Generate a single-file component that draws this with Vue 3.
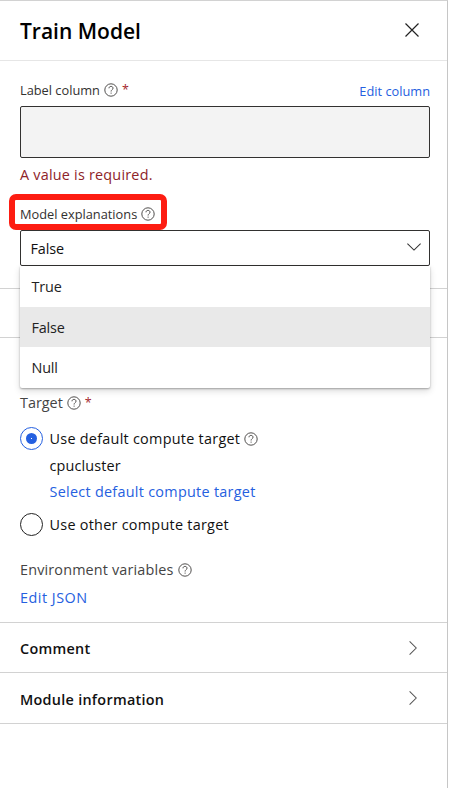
<script setup>
import { h, ref } from 'vue'

const options = ['True', 'False', 'Null']
const selected = ref('False')
const target = ref('default')
const sections = ['Comment', 'Module information']

const HelpIcon = () =>
  h('svg', { width: 14, height: 14, viewBox: '0 0 14 14', fill: 'none', stroke: '#484644', 'stroke-width': 0.95 }, [
    h('circle', { cx: 7, cy: 7, r: 6.2 }),
    h('path', { d: 'M5 5.3C5 4.1 5.8 3.4 7 3.4s2 .7 2 1.8C9 6.7 7.1 6.7 7.1 8.5' }),
    h('path', { d: 'M7.1 9.6v1.1' }),
  ])
</script>

<template>
  <aside class="panel">
    <header class="header">
      <h1 class="title">Train Model</h1>
      <svg class="close" width="14" height="14" viewBox="0 0 14 14">
        <path d="M.5.5l13 13M13.5.5l-13 13" fill="none" stroke="#222" stroke-width="1.2" />
      </svg>
    </header>

    <section class="fields">
      <div class="label-row">
        <span class="small">Label column</span>
        <HelpIcon class="help" />
        <span class="star">*</span>
        <a class="link small edit-column">Edit column</a>
      </div>
      <div class="column-box"></div>
      <p class="error">A value is required.</p>
      <div class="label-row explain">
        <span class="small">Model explanations</span>
        <HelpIcon class="help" />
        <div class="highlight"></div>
      </div>
      <div class="select">
        <span class="value">{{ selected }}</span>
        <svg class="chevron" width="14" height="8" viewBox="0 0 14 8">
          <path d="M.4.6L7 7.1 13.6.6" fill="none" stroke="#333" stroke-width="1.05" />
        </svg>
        <ul class="menu">
          <li v-for="o in options" :key="o" :class="['option', { active: o === selected }]" @click="selected = o">{{ o }}</li>
        </ul>
      </div>
    </section>

    <section class="covered"></section>

    <section class="run">
      <div class="row target">
        <span class="muted">Target</span>
        <HelpIcon class="help" />
        <span class="star">*</span>
      </div>
      <div class="row radio-row first" @click="target = 'default'">
        <span :class="['radio', { on: target === 'default' }]"></span>
        <span class="text">Use default compute target</span>
        <HelpIcon class="help low" />
      </div>
      <div class="row indent cluster"><span>cpucluster</span></div>
      <div class="row indent choose"><a class="link text-link">Select default compute target</a></div>
      <div class="row radio-row second" @click="target = 'other'">
        <span :class="['radio', { on: target === 'other' }]"></span>
        <span class="text">Use other compute target</span>
      </div>
      <div class="row env">
        <span class="muted">Environment variables</span>
        <HelpIcon class="help" />
      </div>
      <div class="row json"><a class="link">Edit JSON</a></div>
    </section>

    <section v-for="s in sections" :key="s" class="fold">
      <h2 class="fold-title">{{ s }}</h2>
      <svg width="8" height="14" viewBox="0 0 8 14">
        <path d="M.6.4L7.2 7 .6 13.6" fill="none" stroke="#555" stroke-width="1.05" />
      </svg>
    </section>
  </aside>
</template>

<style>
body {
  background: #fff;
}
</style>

<style scoped>
.panel {
  box-sizing: border-box;
  width: 448px;
  height: 788px;
  border-top: 1px solid #d2d2d2;
  border-right: 1px solid #c6c6c6;
  background: #fff;
  color: #111;
  font-family: "Open Sans", "Noto Sans", sans-serif;
  font-size: 14.4px;
  line-height: 20px;
  white-space: nowrap;
  overflow: hidden;
}
.header {
  display: flex;
  align-items: center;
  justify-content: space-between;
  box-sizing: border-box;
  height: 60px;
  padding: 0 28px 0 20px;
  border-bottom: 1px solid #e6e6e6;
}
.title {
  margin: 0;
  font-size: 21px;
  font-weight: 600;
  line-height: 28px;
  letter-spacing: 0;
  color: #000;
}
.close {
  margin-bottom: 2px;
}
.fields {
  box-sizing: border-box;
  height: 228px;
  padding: 19px 17px 0 20px;
  border-bottom: 1px solid #d2d2d2;
}
.label-row {
  display: flex;
  align-items: center;
  height: 20px;
  color: #323130;
}
.small {
  font-size: 12.8px;
}
.help {
  flex: none;
  margin-left: 4px;
}
.low {
  margin-top: 2px;
}
.star {
  margin-left: 4px;
  font-size: 12.5px;
  color: #a4262c;
}
.link {
  color: #2560e0;
}
.edit-column {
  margin-left: auto;
  padding-top: 2px;
}
.column-box {
  box-sizing: border-box;
  height: 52px;
  margin-top: 6px;
  border: 1px solid #323130;
  border-radius: 2px;
  background: #f3f3f3;
}
.error {
  margin: 7px 0 0;
  letter-spacing: 0.22px;
  color: #8e2329;
}
.explain {
  position: relative;
  margin-top: 19px;
}
.highlight {
  position: absolute;
  left: -11.5px;
  top: -10px;
  box-sizing: border-box;
  width: 158px;
  height: 36px;
  border: 6px solid #fd1d12;
  border-radius: 7px;
}
.select {
  position: relative;
  display: flex;
  align-items: center;
  justify-content: space-between;
  box-sizing: border-box;
  height: 36px;
  margin-top: 6px;
  padding: 0 8px 0 9.5px;
  border: 1px solid #323130;
  border-radius: 2px;
}
.value {
  padding-top: 2px;
  letter-spacing: -0.1px;
}
.chevron {
  margin-bottom: 2px;
}
.menu {
  position: absolute;
  top: 35px;
  left: -1px;
  right: -1px;
  margin: 0;
  padding: 1px 0;
  list-style: none;
  background: #fff;
  border-radius: 0 0 2px 2px;
  box-shadow: 0 3px 7px rgba(0, 0, 0, 0.14), 0 1px 2px rgba(0, 0, 0, 0.3);
}
.option {
  height: 40px;
  padding-left: 11.5px;
  line-height: 40px;
  letter-spacing: -0.15px;
  color: #222;
}
.option + .option {
  line-height: 42px;
}
.option.active {
  background: #e9e9e9;
}
.covered {
  height: 48px;
  border-bottom: 1px solid #d2d2d2;
}
.run {
  box-sizing: border-box;
  height: 285px;
  padding: 54px 20px 0;
  border-bottom: 1px solid #d2d2d2;
}
.row {
  display: flex;
  align-items: center;
  height: 22px;
}
.muted {
  color: #444;
}
.indent {
  padding-left: 29.5px;
}
.radio-row {
  height: 24px;
}
.first {
  margin-top: 12px;
}
.text {
  padding-top: 2px;
  letter-spacing: 0.27px;
}
.cluster {
  margin-top: 5px;
  letter-spacing: 0.15px;
}
.choose {
  margin-top: 4px;
}
.text-link {
  letter-spacing: 0.28px;
}
.second {
  margin-top: 9px;
}
.env {
  margin-top: 23px;
  letter-spacing: 0.16px;
}
.json {
  margin-top: 6px;
  letter-spacing: 0.5px;
}
.radio {
  display: grid;
  place-items: center;
  box-sizing: border-box;
  width: 23px;
  height: 23px;
  margin-right: 6.5px;
  border: 1px solid #222;
  border-radius: 50%;
}
.radio.on {
  border-color: #2560e0;
}
.radio.on::before {
  content: "";
  width: 11px;
  height: 11px;
  border-radius: 50%;
  background: radial-gradient(circle, #fff 0.5px, #2560e0 0.9px);
}
.fold {
  display: flex;
  align-items: center;
  justify-content: space-between;
  height: 49px;
  padding: 0 30px 0 20px;
  border-bottom: 1px solid #d2d2d2;
}
.fold:last-child {
  height: 50px;
}
.fold-title {
  margin: 2px 0 0;
  font-size: 14.4px;
  font-weight: 600;
  line-height: 20px;
  letter-spacing: 0.28px;
  color: #111;
}
.fold:last-child .fold-title {
  margin-top: 3px;
}
</style>
